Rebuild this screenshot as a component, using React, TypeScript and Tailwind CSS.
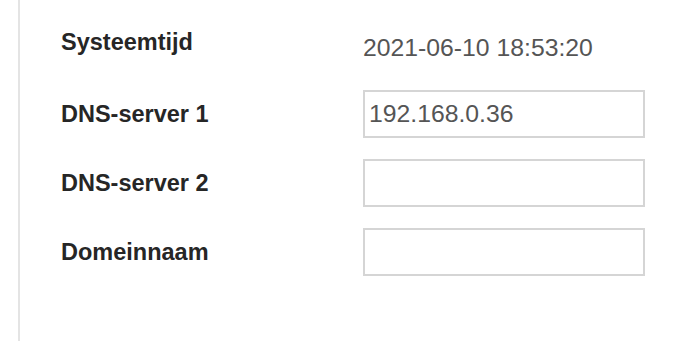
import React from 'react'

const fields = [
  { label: 'DNS-server 1', value: '192.168.0.36' },
  { label: 'DNS-server 2', value: '' },
  { label: 'Domeinnaam', value: '' },
]

export default function App() {
  return (
    <div className="min-h-[341px] bg-white pl-[18px] font-['Liberation_Sans',Arial,sans-serif]">
      <div className="min-h-[341px] border-l-2 border-[#e4e4e4] pl-[41px] pt-[28px]">
        {/* System time */}
        <div className="flex items-start">
          <div className="w-[302px] text-[23.5px] leading-[28px] font-bold text-[#262626]">
            Systeemtijd
          </div>
          <div className="mt-[6px] text-[24.75px] leading-[28px] text-[#555]">
            2021-06-10 18:53:20
          </div>
        </div>

        {/* DNS fields */}
        <div className="mt-[28px] flex flex-col gap-[21px]">
          {fields.map((f) => (
            <div key={f.label} className="flex h-[48px] items-center">
              <label className="w-[302px] text-[23.5px] leading-[28px] font-bold text-[#262626]">
                {f.label}
              </label>
              <input
                type="text"
                defaultValue={f.value}
                className="h-[48px] w-[282px] border-2 border-[#d5d5d5] bg-white pl-[4px] text-[24.75px] text-[#555] outline-none"
              />
            </div>
          ))}
        </div>
      </div>
    </div>
  )
}
